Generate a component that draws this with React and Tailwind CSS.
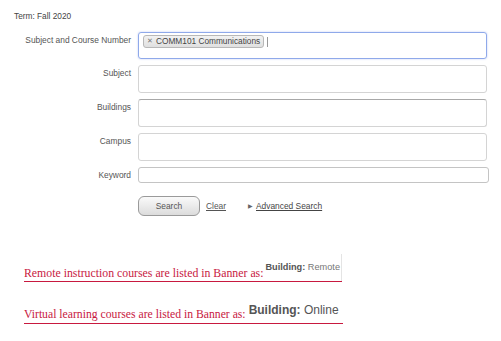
import { useState } from 'react'

export default function App() {
  const [keyword, setKeyword] = useState('')

  // labels on the left, boxes on the right
  const fields = [
    { label: 'Subject', h: 'h-[28px]' },
    { label: 'Buildings', h: 'h-[28px]', dark: true },
    { label: 'Campus', h: 'h-[28px]' },
  ]

  return (
    <div className="w-[501px] h-[341px] bg-white font-['Liberation_Sans',Arial,sans-serif] text-[#444] overflow-hidden">
      <div className="pl-[14px] pt-[10px] text-[8.3px] leading-[12px] text-[#444]">Term: Fall 2020</div>

      <div className="mt-[10px] mr-[14px] grid grid-cols-[131px_1fr] gap-x-[7px] gap-y-[6px]">
        <div className="text-right text-[8.4px] leading-[12px] pt-[2px] text-[#555]">Subject and Course Number</div>
        <div className="h-[27px] border border-[#8fa9ea] rounded-[3px] shadow-[0_0_2px_rgba(88,120,230,0.4)] flex items-start pt-[2px] pl-[4px]">
          <span className="flex items-center h-[13px] px-[3px] border border-[#b8b8b8] rounded-[3px] bg-gradient-to-b from-[#f2f2f2] to-[#e0e0e0] text-[8.3px] text-[#444] whitespace-nowrap">
            <span className="text-[7px] text-[#777] mr-[3px]">✕</span>COMM101 Communications
          </span>
          <span className="ml-[3px] mt-[2px] w-px h-[10px] bg-[#999]" />
        </div>

        {fields.map((f) => (
          <div key={f.label} className="contents">
            <div className="text-right text-[8.4px] leading-[12px] pt-[2px] text-[#555]">{f.label}</div>
            <div className={`${f.h} border border-[#d4d4d4] rounded-[3px] ${f.dark ? 'border-t-[#a8a8a8]' : ''}`} />
          </div>
        ))}

        <div className="text-right text-[8.4px] leading-[12px] pt-[2px] text-[#555]">Keyword</div>
        <input
          value={keyword}
          onChange={(e) => setKeyword(e.target.value)}
          className="h-[16px] -mr-[2px] border border-[#c4c4c4] rounded-[3px] px-1 text-[9px] outline-none"
        />
      </div>

      <div className="mt-[13px] ml-[138px] flex items-center text-[8.4px]">
        <button className="w-[62px] h-[20px] rounded-[6px] border border-[#9a9a9a] bg-gradient-to-b from-[#fafafa] to-[#dcdcdc] text-[#555] text-[8.4px]">
          Search
        </button>
        <a className="ml-[6px] underline text-[#555]">Clear</a>
        <span className="ml-[22px] text-[6px] text-[#666]">▶</span>
        <a className="ml-[3px] underline text-[#444]">Advanced Search</a>
      </div>

      <div className="mt-[38px] ml-[24px] font-['Liberation_Serif','Times_New_Roman',serif] text-[#c8193f]">
        <div className="inline-flex items-end border-b border-[#c8193f] text-[11.8px] leading-[14px]">
          <span className="pb-[1px]">Remote instruction courses are listed in Banner as:</span>
          <span className="ml-[2px] h-[27px] pr-[1px] border-r border-[#e4e4e4] flex items-center font-['Liberation_Sans',Arial,sans-serif] text-[9.2px] text-[#777] whitespace-nowrap">
            <span className="mb-[2px]"><b className="text-[#555]">Building:</b> Remote</span>
          </span>
        </div>
        <div className="mt-[17px]">
          <div className="inline-flex items-end border-b border-[#c8193f] text-[11.7px] leading-[14px]">
            <span className="pb-[1px]">Virtual learning courses are listed in Banner as:</span>
            <span className="ml-[3px] mb-[6px] pr-[4px] font-['Liberation_Sans',Arial,sans-serif] text-[12px] leading-[14px] text-[#555] whitespace-nowrap">
              <b>Building:</b> Online
            </span>
          </div>
        </div>
      </div>
    </div>
  )
}
